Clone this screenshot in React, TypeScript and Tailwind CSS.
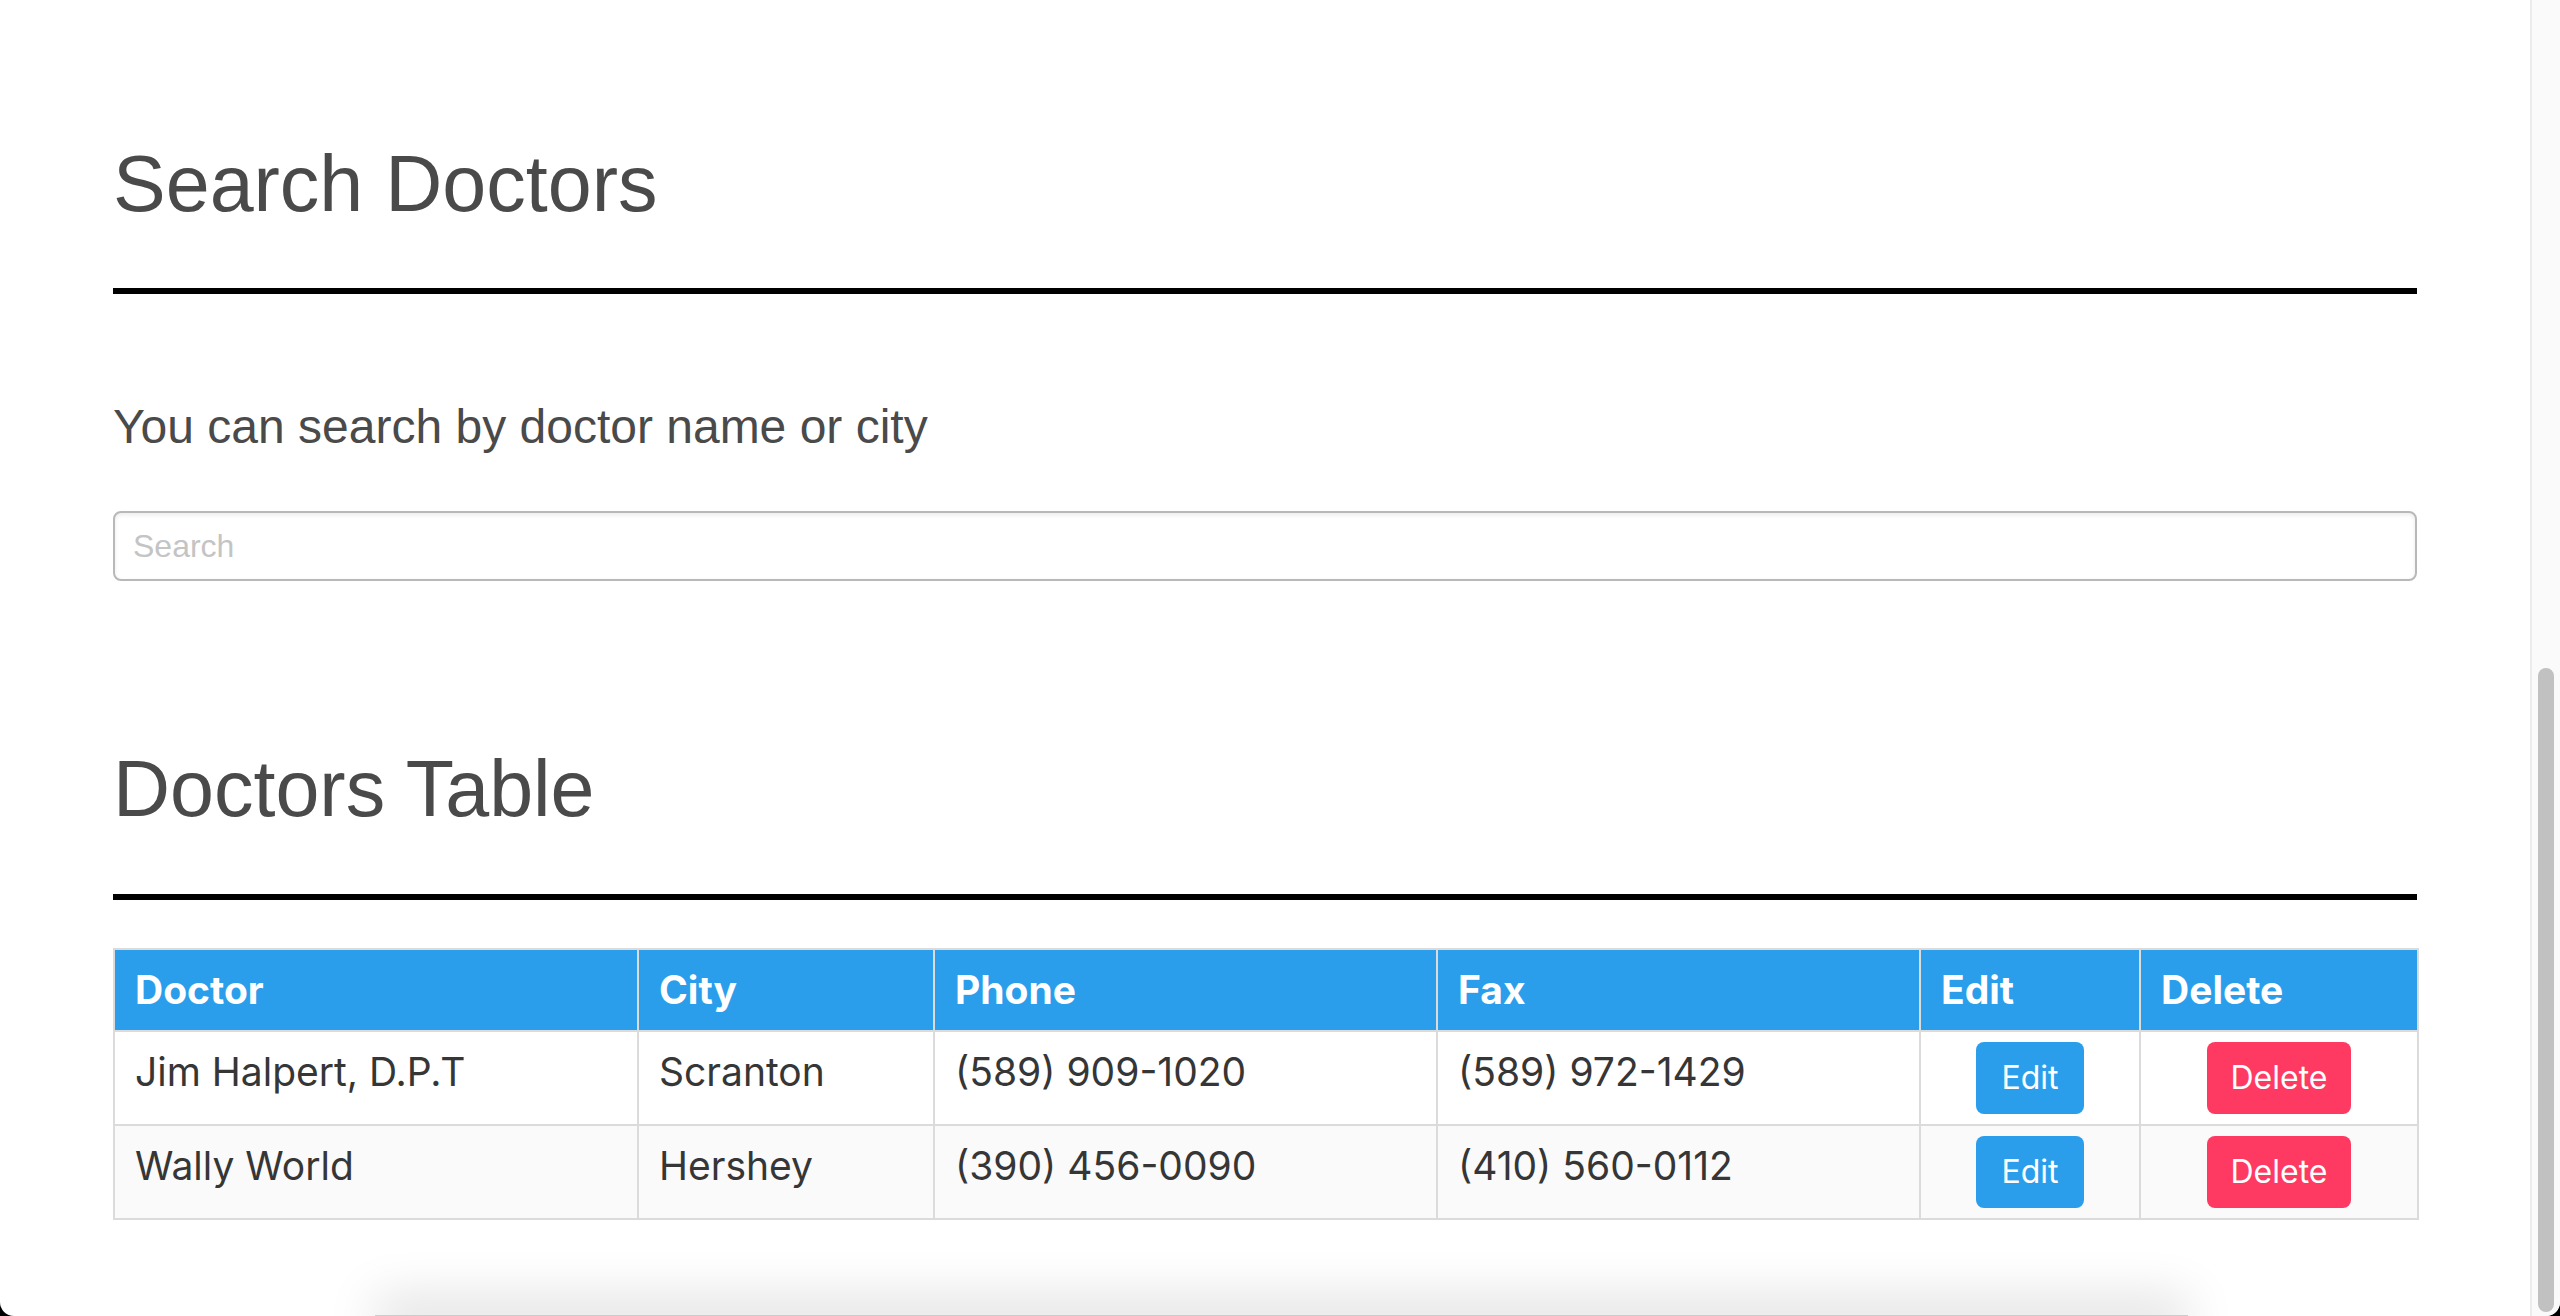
import React from "react";

type Doctor = {
  name: string;
  city: string;
  phone: string;
  fax: string;
};

const DOCTORS: Doctor[] = [
  { name: "Jim Halpert, D.P.T", city: "Scranton", phone: "(589) 909-1020", fax: "(589) 972-1429" },
  { name: "Wally World", city: "Hershey", phone: "(390) 456-0090", fax: "(410) 560-0112" },
];

const COLUMNS = ["Doctor", "City", "Phone", "Fax", "Edit", "Delete"];

const heading = "text-[79px] leading-[88px] text-[#4a4a4a] font-['Liberation_Sans',Arial,sans-serif]";
const cell = "border-2 border-[#dbdbdb] px-[20px] py-[10px] align-top";

function DoctorRow({ doctor, striped }: { doctor: Doctor; striped: boolean }) {
  return (
    <tr className={striped ? "bg-[#fafafa]" : "bg-white"}>
      <td className={cell}>{doctor.name}</td>
      <td className={cell}>{doctor.city}</td>
      <td className={cell}>{doctor.phone}</td>
      <td className={cell}>{doctor.fax}</td>
      <td className={`${cell} text-center`}>
        <button className="w-[108px] h-[72px] rounded-[8px] bg-[#2b9eeb] text-white text-[32px] leading-none">
          Edit
        </button>
      </td>
      <td className={`${cell} text-center`}>
        <button className="w-[144px] h-[72px] rounded-[8px] bg-[#ff3a62] text-white text-[32px] leading-none">
          Delete
        </button>
      </td>
    </tr>
  );
}

export default function App() {
  return (
    <div className="h-screen bg-black">
      <div className="h-full flex bg-white rounded-b-[14px] overflow-hidden">
        <main className="flex-1 overflow-hidden">
          <div className="w-[2304px] mx-auto pt-[140px]">
            <h1 className={heading}>Search Doctors</h1>
            <div className="mt-[60px] h-[6px] bg-black" />

            <p className="mt-[105px] text-[48px] leading-[56px] text-[#4a4a4a] font-['Liberation_Sans',Arial,sans-serif]">
              You can search by doctor name or city
            </p>
            <input
              type="text"
              placeholder="Search"
              className="mt-[56px] block w-full h-[70px] border-2 border-[#b8b8b8] rounded-[8px] pl-[18px] text-[32px] text-[#363636] placeholder:text-[#c4c4c4] shadow-[inset_0_2px_4px_rgba(10,10,10,0.08)] outline-none font-['Liberation_Sans',Arial,sans-serif]"
            />

            <h2 className={`mt-[164px] ${heading}`}>Doctors Table</h2>
            <div className="mt-[61px] h-[6px] bg-black" />

            <table className="mt-[48px] w-full table-fixed border-collapse text-[39px] leading-[60px] text-[#363636] font-['Inter',sans-serif]">
              <colgroup>
                <col className="w-[524px]" />
                <col className="w-[296px]" />
                <col className="w-[503px]" />
                <col className="w-[483px]" />
                <col className="w-[220px]" />
                <col className="w-[278px]" />
              </colgroup>
              <thead>
                <tr className="bg-[#2b9eeb] text-white">
                  {COLUMNS.map((c) => (
                    <th key={c} className="border-2 border-[#dbdbdb] px-[20px] py-[10px] text-left font-bold">
                      {c}
                    </th>
                  ))}
                </tr>
              </thead>
              <tbody>
                {DOCTORS.map((d, i) => (
                  <DoctorRow key={d.name} doctor={d} striped={i % 2 === 1} />
                ))}
              </tbody>
            </table>
          </div>
          <div className="mt-[95px] ml-[375px] w-[1813px] h-[40px] border-t-2 border-[#cccccc] bg-white shadow-[0_-18px_50px_rgba(0,0,0,0.13)]" />
        </main>

        <aside className="w-[30px] bg-[#fafafa] border-l-2 border-[#ececec] flex flex-col pt-[668px] pb-[4px] px-[6px]">
          <div className="flex-1 rounded-full bg-[#c1c1c1]" />
        </aside>
      </div>
    </div>
  );
}
